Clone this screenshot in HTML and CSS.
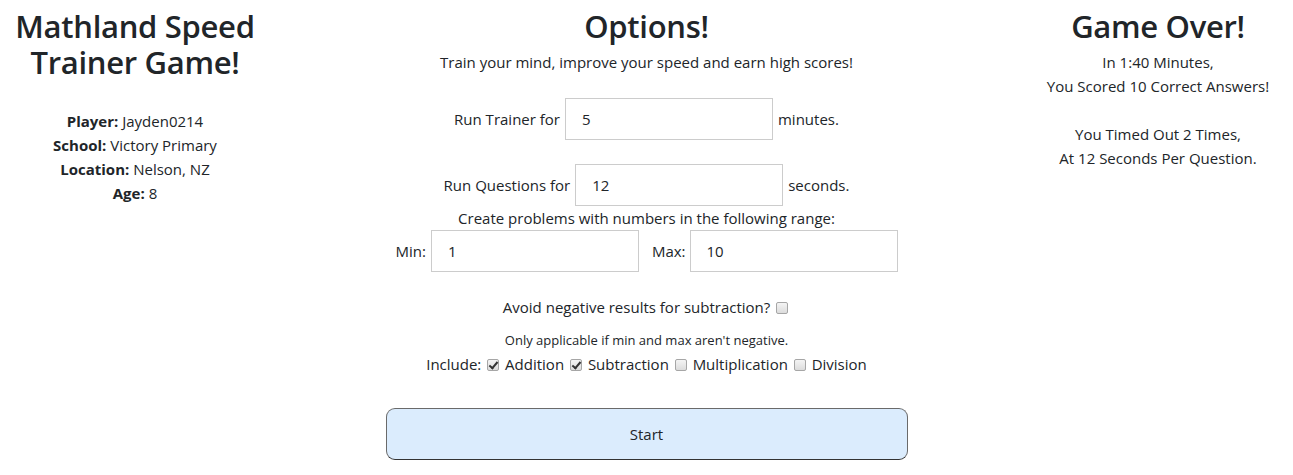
FILE: index.html
```html
<!DOCTYPE html>
<html lang="en">
<head>
<meta charset="utf-8">
<title>Mathland Speed Trainer Game!</title>
<link rel="stylesheet" href="styles.css">
</head>
<body>
<div class="page">
  <section class="col side">
    <h1 class="title">Mathland Speed Trainer Game!</h1>
    <div class="info">
      <div><b>Player:</b> Jayden0214</div>
      <div><b>School:</b> Victory Primary</div>
      <div><b>Location:</b> Nelson, NZ</div>
      <div><b>Age:</b> 8</div>
    </div>
  </section>

  <section class="col main">
    <h1 class="title">Options!</h1>
    <p class="lead">Train your mind, improve your speed and earn high scores!</p>

    <div class="row row-first">
      <span>Run Trainer for</span>
      <input class="field" type="text" value="5">
      <span>minutes.</span>
    </div>
    <div class="row row-second">
      <span>Run Questions for</span>
      <input class="field" type="text" value="12">
      <span>seconds.</span>
    </div>
    <p class="line">Create problems with numbers in the following range:</p>
    <div class="row range">
      <span>Min:</span>
      <input class="field" type="text" value="1">
      <span class="max-label">Max:</span>
      <input class="field" type="text" value="10">
    </div>

    <p class="line avoid">Avoid negative results for subtraction? <input class="box" type="checkbox"></p>
    <p class="note">Only applicable if min and max aren't negative.</p>
    <p class="line include">Include: <input class="box" type="checkbox" checked> Addition <input class="box" type="checkbox" checked> Subtraction <input class="box" type="checkbox"> Multiplication <input class="box" type="checkbox"> Division</p>

    <button class="start" type="button">Start</button>
  </section>

  <section class="col side">
    <h1 class="title">Game Over!</h1>
    <div class="info">
      <div>In 1:40 Minutes,</div>
      <div>You Scored 10 Correct Answers!</div>
      <div class="blank">&nbsp;</div>
      <div>You Timed Out 2 Times,</div>
      <div>At 12 Seconds Per Question.</div>
    </div>
  </section>
</div>
</body>
</html>
```

FILE: styles.css
```css
* { box-sizing: border-box; }

body {
  margin: 0;
  font-family: "Open Sans", "Noto Sans", "Liberation Sans", sans-serif;
  font-size: 15px;
  line-height: 24px;
  color: #212529;
  background: #fff;
}

.page {
  display: grid;
  grid-template-columns: 270px 1fr 270px;
}

.col {
  display: flex;
  flex-direction: column;
  align-items: center;
  text-align: center;
}

.title {
  margin: 8px 0 0;
  font-size: 31px;
  line-height: 36px;
  font-weight: 600;
  letter-spacing: -0.3px;
}

.side .title + .info {
  margin-top: 6px;
}

.col.side:first-child .title + .info {
  margin-top: 29px;
}

.info b { font-weight: 700; }

.lead {
  margin: 6px 0 0;
}

.row {
  display: flex;
  align-items: center;
  justify-content: center;
  gap: 5px;
}

.row-first { margin-top: 24px; }
.row-second { margin-top: 24px; }

.field {
  width: 208px;
  height: 42px;
  border: 1px solid #cccccc;
  border-radius: 0;
  padding: 0 16px;
  font: inherit;
  color: #212529;
  background: #fff;
}

.line {
  margin: 0;
}

.range { margin-top: 0; }
.max-label { margin-left: 8px; margin-right: -1px; }

.avoid { margin-top: 23px; }

.note {
  margin: 11px 0 0;
  font-size: 13px;
  line-height: 20px;
}

.include { margin-top: 2px; }

.box {
  -webkit-appearance: none;
  appearance: none;
  position: relative;
  width: 12px;
  height: 12px;
  margin: 0 2px;
  vertical-align: -1px;
  border: 1px solid #a6a6a6;
  border-radius: 2px;
  background: linear-gradient(#f4f4f4, #dcdcdc);
}

.box:checked::before {
  content: "";
  position: absolute;
  left: 3px;
  top: 0px;
  width: 3px;
  height: 7px;
  border: solid #333;
  border-width: 0 2px 2px 0;
  transform: rotate(40deg);
}

.start {
  margin-top: 32px;
  width: 522px;
  height: 52px;
  border: 1px solid #6a6a6a;
  border-bottom-color: #333;
  border-radius: 9px;
  background: #dbecfd;
  font: inherit;
  color: #212529;
}
```
